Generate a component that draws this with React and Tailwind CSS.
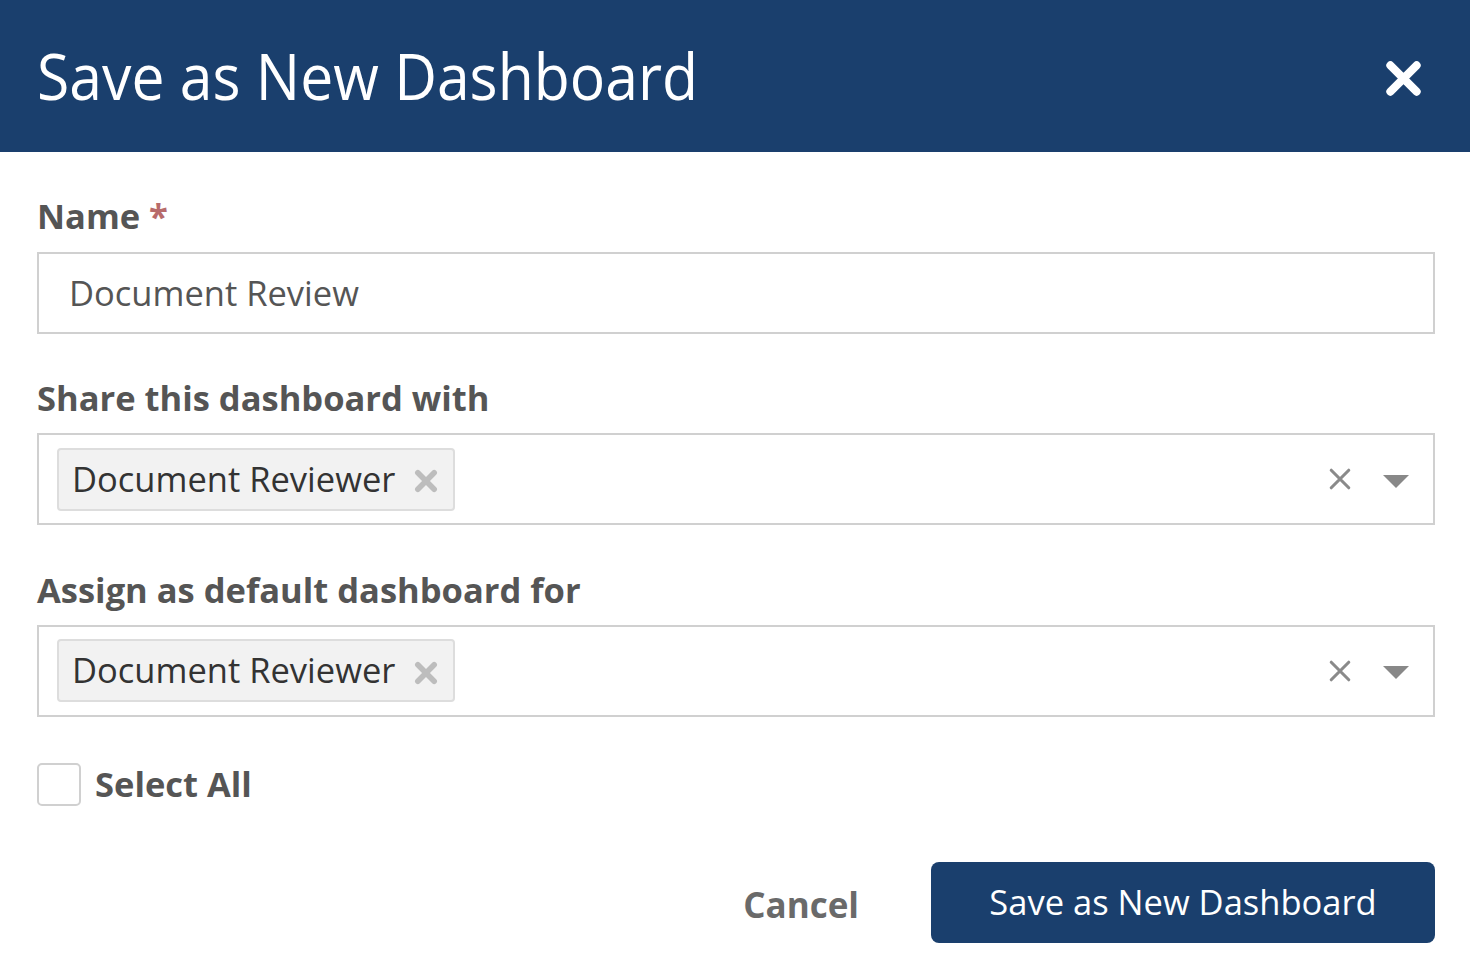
import React, { useState } from "react";

const NAVY = "bg-[#1a3f6d]";

function CloseIcon({ className }) {
  return (
    <svg viewBox="0 0 24 24" className={className} fill="none" stroke="currentColor" strokeLinecap="round">
      <path d="M5 5L19 19M19 5L5 19" />
    </svg>
  );
}

function MultiSelect({ values, onRemove }) {
  return (
    <div className="flex h-[92px] items-center border-2 border-[#d0d0d0] bg-white pl-[18px] pr-[24px]">
      <div className="flex flex-1 items-center gap-2">
        {values.map((v) => (
          <div
            key={v}
            className="flex h-[63px] items-center rounded-[4px] border-2 border-[#dddddd] bg-[#f2f2f2] pl-[13px] pr-[13px]"
          >
            <span className="text-[34.5px] leading-none text-[#333]">{v}</span>
            <button onClick={() => onRemove(v)} className="ml-[17px] mt-[4px] text-[#bdbdbd]">
              <CloseIcon className="h-[28px] w-[28px] [stroke-width:4.8]" />
            </button>
          </div>
        ))}
      </div>
      <button className="mr-[28px] text-[#8a8a8a]">
        <CloseIcon className="h-[30px] w-[30px] [stroke-width:2.5]" />
      </button>
      <svg viewBox="0 0 26 13" className="mt-[4px] h-[13px] w-[26px] text-[#888]" fill="currentColor">
        <path d="M0 0H26L13 13Z" />
      </svg>
    </div>
  );
}

export default function App() {
  const [name, setName] = useState("Document Review");
  const [shareWith, setShareWith] = useState(["Document Reviewer"]);
  const [defaultFor, setDefaultFor] = useState(["Document Reviewer"]);
  const [selectAll, setSelectAll] = useState(false);

  return (
    <div className="min-h-[980px] w-full bg-white font-['Open_Sans',sans-serif]">
      <div className={`flex h-[152px] items-center justify-between ${NAVY} pl-[37px] pr-[44px]`}>
        <h1 className="origin-left scale-x-[0.92] text-[64px] font-normal leading-none text-white">
          Save as New Dashboard
        </h1>
        <button className="mt-[4px] text-white">
          <CloseIcon className="h-[45px] w-[45px] [stroke-width:4.3]" />
        </button>
      </div>

      <div className="pl-[37px] pr-[35px] pt-[47px]">
        <label className="block text-[34.5px] font-bold leading-none text-[#555]">
          Name <span className="text-[#b86b6b]">*</span>
        </label>
        <input
          type="text"
          value={name}
          onChange={(e) => setName(e.target.value)}
          className="mt-[18px] box-border h-[82px] w-full border-2 border-[#d0d0d0] px-[30px] text-[34.5px] text-[#555] outline-none"
        />

        <label className="mt-[47px] block text-[34.5px] font-bold leading-none text-[#555]">
          Share this dashboard with
        </label>
        <div className="mt-[18px]">
          <MultiSelect values={shareWith} onRemove={(v) => setShareWith(shareWith.filter((x) => x !== v))} />
        </div>

        <label className="mt-[48px] block text-[34.5px] font-bold leading-none text-[#555]">
          Assign as default dashboard for
        </label>
        <div className="mt-[17px]">
          <MultiSelect values={defaultFor} onRemove={(v) => setDefaultFor(defaultFor.filter((x) => x !== v))} />
        </div>

        <label className="mt-[46px] flex h-[43px] cursor-pointer items-center gap-[14px]">
          <input
            type="checkbox"
            checked={selectAll}
            onChange={() => setSelectAll(!selectAll)}
            className="h-[43px] w-[44px] appearance-none rounded-[5px] border-2 border-[#d0d0d0] bg-white"
          />
          <span className="text-[34.5px] font-bold leading-none text-[#555]">Select All</span>
        </label>

        <div className="mt-[56px] flex items-center justify-end gap-[72px]">
          <button className="mt-[4px] text-[35px] font-bold leading-none text-[#6a6a6a]">Cancel</button>
          <button className={`h-[81px] w-[504px] rounded-[8px] ${NAVY} text-[34.5px] text-white`}>
            Save as New Dashboard
          </button>
        </div>
      </div>
    </div>
  );
}
